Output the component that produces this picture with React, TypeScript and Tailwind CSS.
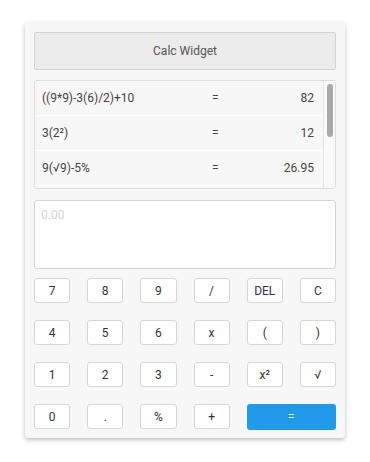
const history = [
  { expr: "((9*9)-3(6)/2)+10", result: "82" },
  { expr: "3(2²)", result: "12" },
  { expr: "9(√9)-5%", result: "26.95" },
  { expr: "", result: "" },
];

const keys = ["7", "8", "9", "/", "DEL", "C", "4", "5", "6", "x", "(", ")", "1", "2", "3", "-", "x²", "√", "0", ".", "%", "+"];

export default function App() {
  return (
    <div className="min-h-screen bg-white pt-[22px] pl-[25px] font-['Roboto','Liberation_Sans',sans-serif]">
      <div className="w-[320px] h-[416px] rounded-[3px] bg-[#f7f7f7] px-[9px] pt-[10px] shadow-[0_2px_4px_rgba(0,0,0,0.25)]">
        {/* Header */}
        <div className="h-[38px] flex items-center justify-center rounded-[2px] border border-[#d3d3d3] bg-[#ebebeb] text-[12px] text-[#555]">
          Calc Widget
        </div>

        {/* History */}
        <div className="mt-[10px] h-[109px] flex overflow-hidden rounded-[3px] border border-[#dcdcdc] bg-[#f7f7f7]">
          <div className="flex-1 flex flex-col">
            {history.map((row, i) => (
              <div
                key={i}
                className="h-[35px] shrink-0 flex items-center border-b border-white pl-[7px] pr-[9px] text-[12px] text-[#444]"
              >
                <span className="w-[170px]">{row.expr}</span>
                <span>{row.expr ? "=" : ""}</span>
                <span className="flex-1 text-right">{row.result}</span>
              </div>
            ))}
          </div>
          <div className="w-[12px] border-l border-[#e4e4e4] bg-[#f9f9f9] flex justify-center pt-[3px]">
            <div className="w-[6px] h-[53px] rounded-full bg-[#a9a9a9]" />
          </div>
        </div>

        {/* Input */}
        <input
          placeholder="0.00"
          className="mt-[11px] block w-full h-[69px] rounded-[3px] border border-[#d4d4d4] bg-white px-[6px] pb-[40px] text-[12px] text-[#333] placeholder:text-[#d4d4d4] outline-none"
        />

        {/* Keys */}
        <div className="mt-[9px] grid grid-cols-6 gap-x-[17px] gap-y-[17px]">
          {keys.map((k) => (
            <button
              key={k}
              className="h-[25px] rounded-[3px] border border-[#d6d6d6] bg-white text-[12px] text-[#333]"
            >
              {k}
            </button>
          ))}
          <button className="col-span-2 h-[26px] rounded-[3px] bg-[#1f9bea] text-[12px] text-white">
            =
          </button>
        </div>
      </div>
    </div>
  );
}
